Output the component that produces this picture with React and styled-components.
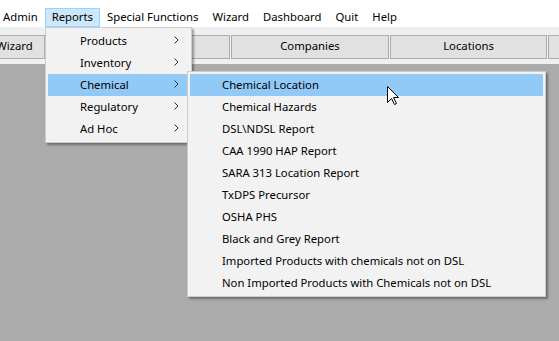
import React from "react";
import styled, { createGlobalStyle } from "styled-components";

const Global = createGlobalStyle`
  html, body { margin: 0; padding: 0; }
  body { font-family: "Noto Sans", "Liberation Sans", sans-serif; font-size: 11.3px; color: #000; }
  #root { width: 559px; height: 341px; overflow: hidden; }
`;

const Screen = styled.div`
  position: relative;
  width: 559px;
  height: 341px;
  display: flex;
  flex-direction: column;
  background: #ababab;
  overflow: hidden;
`;

const MenuBar = styled.div`
  display: flex;
  align-items: flex-end;
  height: 27px;
  background: #ffffff;
  box-sizing: border-box;
`;

const MenuBarItem = styled.div`
  height: 19px;
  line-height: 16px;
  padding: 0 ${(p) => (p.$first ? 6 : 6)}px 0 ${(p) => (p.$first ? 2 : 6)}px;
  box-sizing: border-box;
  border: 1px solid ${(p) => (p.$active ? "#99d1ff" : "transparent")};
  background: ${(p) => (p.$active ? "#cce8ff" : "transparent")};
  white-space: nowrap;
`;

const Toolbar = styled.div`
  display: flex;
  gap: 1px;
  height: 37px;
  padding-top: 8px;
  box-sizing: border-box;
  background: #f0f0f0;
`;

const ToolButton = styled.div`
  flex: 0 0 ${(p) => p.$w}px;
  margin-left: ${(p) => p.$ml || 0}px;
  height: 24px;
  padding-bottom: 2px;
  box-sizing: border-box;
  border: 1px solid #adadad;
  background: #e1e1e1;
  display: flex;
  align-items: center;
  justify-content: center;
  line-height: 1;
`;

const Workspace = styled.div`
  flex: 1;
  background: #ababab;
`;

const Menu = styled.div`
  position: absolute;
  left: ${(p) => p.$x}px;
  top: ${(p) => p.$y}px;
  width: ${(p) => p.$w}px;
  box-sizing: border-box;
  padding: 2px;
  background: #f2f2f2;
  border: 1px solid #cccccc;
  box-shadow: 2px 2px 2px rgba(0, 0, 0, 0.35);
  display: flex;
  flex-direction: column;
`;

const MenuRow = styled.div`
  height: 22px;
  box-sizing: border-box;
  display: flex;
  align-items: center;
  padding: 0 10px 2px 32px;
  background: ${(p) => (p.$hl ? "#91c9f7" : "transparent")};
  white-space: nowrap;
`;

const Label = styled.span`
  flex: 1;
`;

const Chevron = () => (
  <svg width="5" height="8" viewBox="0 0 5 8">
    <polyline points="0.5,0.5 4,4 0.5,7.5" fill="none" stroke="#333" strokeWidth="1" />
  </svg>
);

const Cursor = styled.svg`
  position: absolute;
  left: 387px;
  top: 86px;
`;

const mainItems = ["Products", "Inventory", "Chemical", "Regulatory", "Ad Hoc"];
const subItems = [
  "Chemical Location",
  "Chemical Hazards",
  "DSL\\NDSL Report",
  "CAA 1990 HAP Report",
  "SARA 313 Location Report",
  "TxDPS Precursor",
  "OSHA PHS",
  "Black and Grey Report",
  "Imported Products with chemicals not on DSL",
  "Non Imported Products with Chemicals not on DSL",
];

export default function App() {
  return (
    <>
      <Global />
      <Screen>
        <MenuBar>
          <MenuBarItem $first>Admin</MenuBarItem>
          <MenuBarItem $active>Reports</MenuBarItem>
          <MenuBarItem>Special Functions</MenuBarItem>
          <MenuBarItem>Wizard</MenuBarItem>
          <MenuBarItem>Dashboard</MenuBarItem>
          <MenuBarItem>Quit</MenuBarItem>
          <MenuBarItem>Help</MenuBarItem>
        </MenuBar>
        <Toolbar>
          <ToolButton $w={61} $ml={-16}>Wizard</ToolButton>
          <ToolButton $w={184} />
          <ToolButton $w={158}>Companies</ToolButton>
          <ToolButton $w={157}>Locations</ToolButton>
          <ToolButton $w={157} />
        </Toolbar>
        <Workspace />
        <Menu $x={45} $y={27} $w={147}>
          {mainItems.map((t) => (
            <MenuRow key={t} $hl={t === "Chemical"}>
              <Label>{t}</Label>
              <Chevron />
            </MenuRow>
          ))}
        </Menu>
        <Menu $x={187} $y={71} $w={359}>
          {subItems.map((t, i) => (
            <MenuRow key={t} $hl={i === 0}>
              <Label>{t}</Label>
            </MenuRow>
          ))}
        </Menu>
        <Cursor width="13" height="20" viewBox="0 0 13 20">
          <path
            d="M0.5 0.5 L0.5 16.5 L4.5 12.5 L7.5 18.5 L9.5 17.5 L6.5 11.5 L11.5 11.5 Z"
            fill="#fff"
            stroke="#000"
            strokeWidth="1"
            strokeLinejoin="miter"
          />
        </Cursor>
      </Screen>
    </>
  );
}
